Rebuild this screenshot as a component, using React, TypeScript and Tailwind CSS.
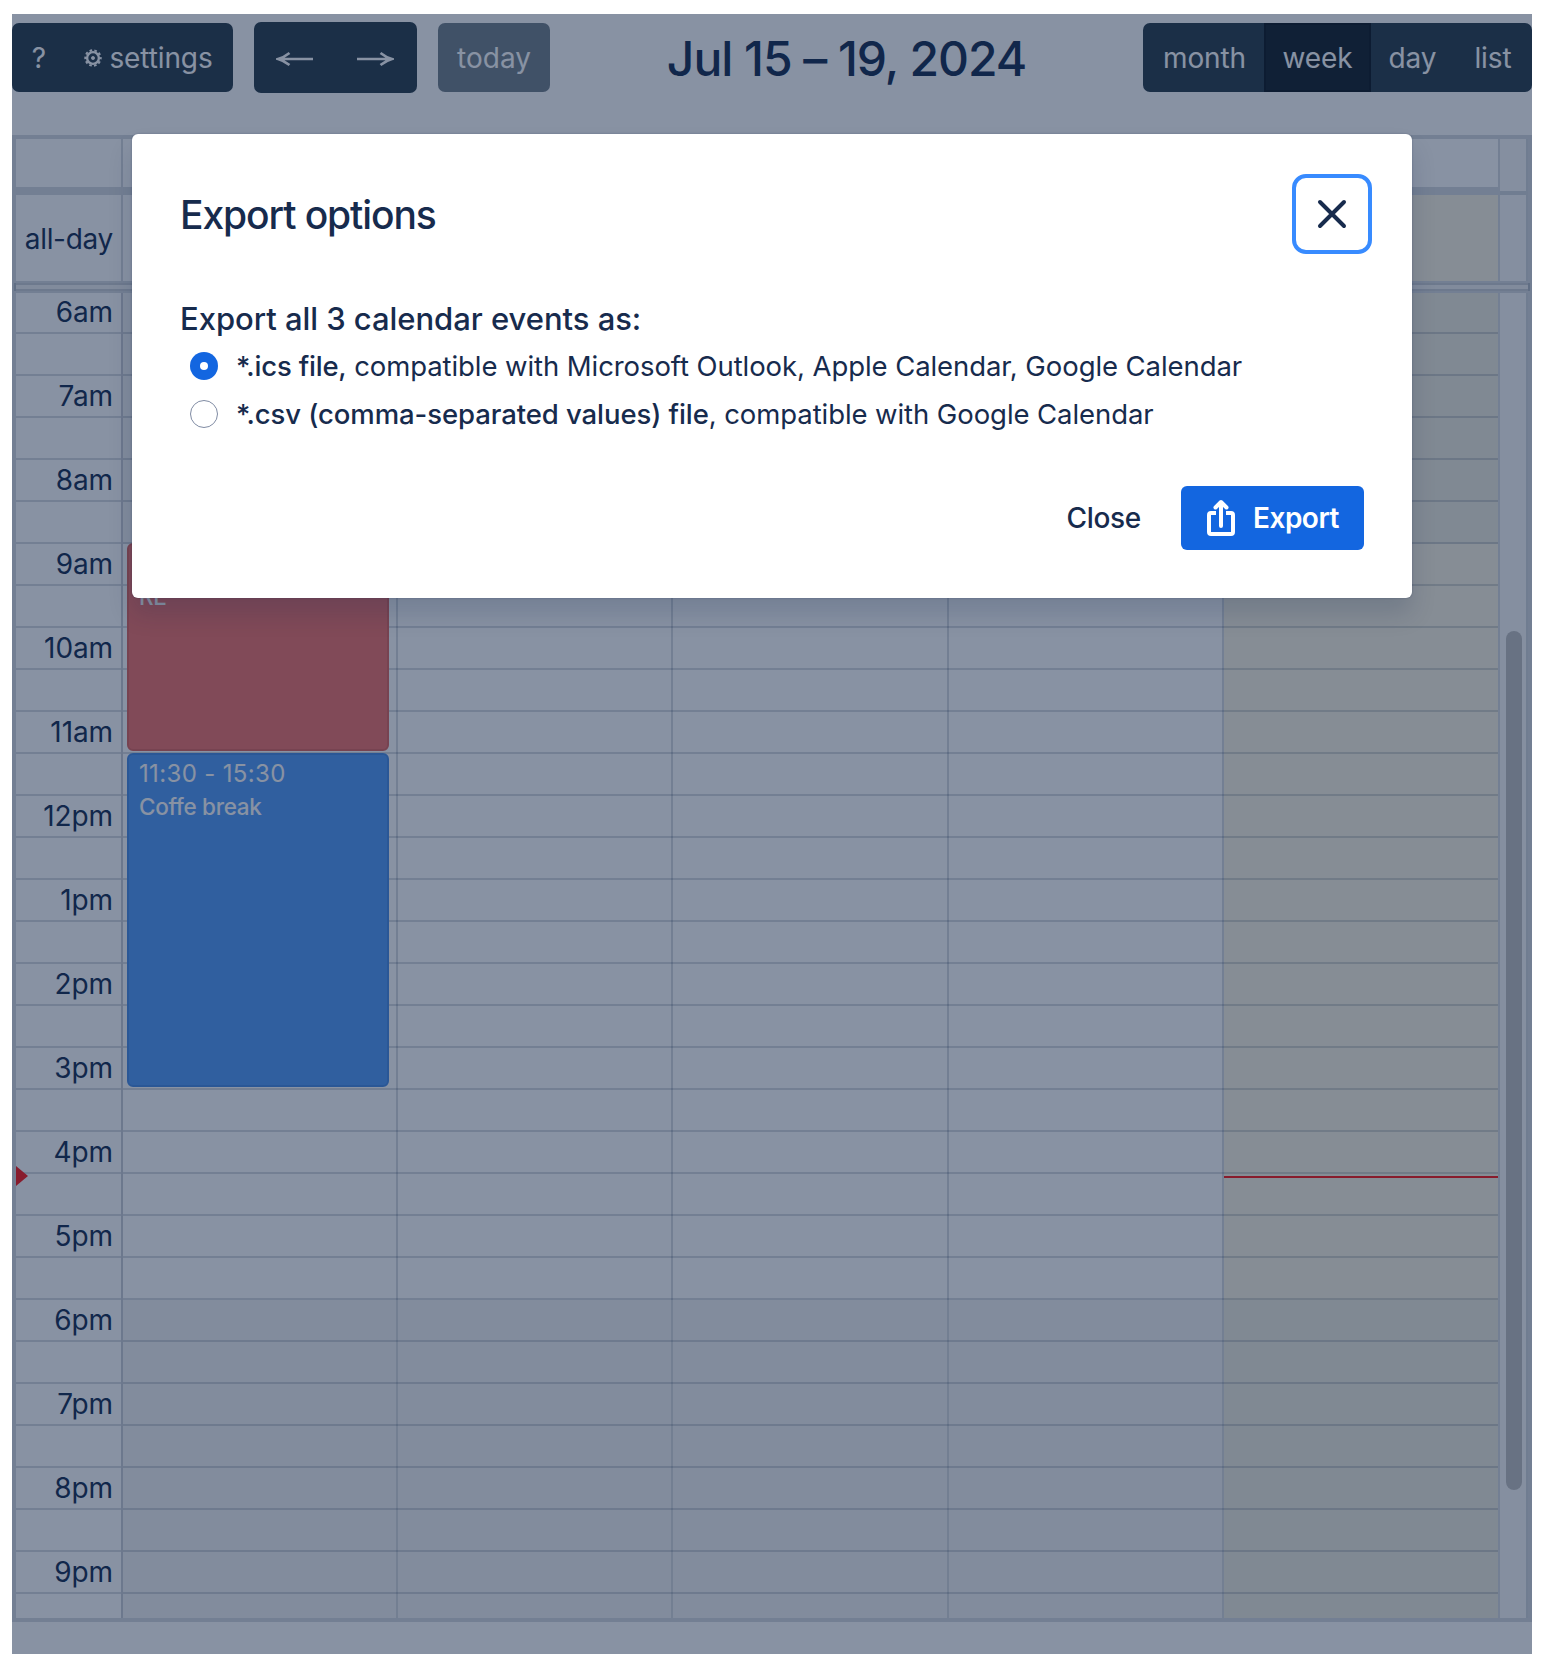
const hours = [
  "6am", "7am", "8am", "9am", "10am", "11am", "12pm", "1pm",
  "2pm", "3pm", "4pm", "5pm", "6pm", "7pm", "8pm", "9pm",
];

const slots = Array.from({ length: 31 }, (_, i) => i);

const line = "border-[#091e42]/16";

function GearIcon() {
  return (
    <svg className="mr-[7px] size-[18px]" viewBox="0 0 18 18" fill="none" stroke="currentColor">
      <circle cx="9" cy="9" r="5.9" strokeWidth="2.4" />
      <circle cx="9" cy="9" r="1.6" fill="currentColor" strokeWidth="0.8" />
      <circle cx="9" cy="9" r="7.7" strokeWidth="2" strokeDasharray="2.6 2.238" strokeDashoffset="1.3" />
    </svg>
  );
}

function ArrowIcon({ flip = false }: { flip?: boolean }) {
  return (
    <svg
      className={flip ? "-ml-0.5 h-4 w-[38px] -scale-x-100" : "h-4 w-[38px]"}
      viewBox="0 0 38 16"
      fill="none"
      stroke="currentColor"
      strokeWidth="2.6"
    >
      <path d="M37 8H2M13.5 2C10.5 4.4 6.500 6.800 2 8C6.500 9.200 10.500 11.600 13.500 14" />
    </svg>
  );
}

function Toolbar() {
  return (
    <header className="flex h-[87px] items-center justify-between text-[28px] text-white">
      <div className="flex items-center gap-[21px]">
        <div className="flex h-[69px] w-[221px] rounded-[7px] bg-[#2e4150]">
          <button className="w-[54px]">?</button>
          <button className="flex w-[167px] items-center justify-center pr-0.5 tracking-[-0.1px]">
            <GearIcon />
            settings
          </button>
        </div>
        <div className="flex h-[71px] w-[163px] rounded-[7px] bg-[#2e4150]">
          <button className="flex flex-1 items-center justify-center pt-[3px]">
            <ArrowIcon />
          </button>
          <button className="flex flex-1 items-center justify-center pt-[3px]">
            <ArrowIcon flip />
          </button>
        </div>
        <button className="h-[69px] w-[112px] rounded-[7px] bg-[#2e4150] opacity-65">today</button>
      </div>
      <h2 className="pt-0.5 text-[48px] leading-none font-medium tracking-[-1.05px] text-[#1b3256]">
        Jul 15 – 19, 2024
      </h2>
      <div className="flex h-[69px] overflow-hidden rounded-[7px] bg-[#2e4150] tracking-[-0.1px]">
        <button className="w-[121px] pl-0.5">month</button>
        <button className="w-[107px] border-2 border-[#151e27] bg-[#1a252f]">week</button>
        <button className="w-[83px]">day</button>
        <button className="w-[78px]">list</button>
      </div>
    </header>
  );
}

function CalendarEvent({ time, title, className }: { time: string; title: string; className: string }) {
  return (
    <div className={`absolute left-1 w-[262px] rounded-md border-2 px-2.5 pt-0.5 text-white ${className}`}>
      <div className="text-[24px] leading-[34px] tracking-[0.35px]">{time}</div>
      <div className="text-[22.5px] leading-[32px] font-medium tracking-[-0.3px]">{title}</div>
    </div>
  );
}

const dayColumns = "grid w-[1377px] grid-cols-[275px_275px_276px_275px_276px]";

function DayCells({ today = "" }: { today?: string }) {
  return (
    <div className={dayColumns}>
      <div className={`border-r-2 ${line}`} />
      <div className={`border-r-2 ${line}`} />
      <div className={`border-r-2 ${line}`} />
      <div className={`border-r-2 ${line}`} />
      <div className={`border-r-2 bg-clip-padding ${line} ${today}`} />
    </div>
  );
}

function Calendar() {
  return (
    <div className={`mt-[34px] flex h-[1487px] flex-col border-4 ${line}`}>
      <div className="flex h-14">
        <div className={`flex flex-1 border-b-8 ${line}`}>
          <div className={`w-[107px] border-r-2 ${line}`} />
          <DayCells />
        </div>
        <div className={`h-14 w-7 border-r-2 border-b-4 bg-[#fafafa] ${line}`} />
      </div>

      <div className={`flex h-[88px] border-b-2 ${line}`}>
        <div className={`flex w-[107px] items-center justify-end border-r-2 pt-px pr-2 text-[28px] tracking-[-0.3px] ${line}`}>
          all-day
        </div>
        <DayCells today="bg-[#fbf6e4]" />
        <div className={`w-7 border-r-2 bg-[#fafafa] ${line}`} />
      </div>

      <div className="-mx-0.5 h-2 border-2 border-[#091e42]/16 bg-[#d0d0d0]/30 bg-clip-border" />
      <div className={`h-0.5 border-b-2 ${line}`} />

      <div className="relative flex flex-1 overflow-hidden">
        <div className="w-[107px] border-r-2 border-[#091e42]/22 text-[28px] tracking-[-0.1px]">
          {hours.map((h) => (
            <div key={h} className="first:-mt-px">
              <div className={`flex h-[42px] items-center justify-end border-b-2 pr-2 ${line}`}>{h}</div>
              <div className={`h-[42px] border-b-2 ${line}`} />
            </div>
          ))}
        </div>

        <div className="relative w-[1377px]">
          <div className="absolute inset-0 grid grid-cols-[275px_275px_276px_275px_276px]">
            <div className={`relative border-r-2 ${line}`}>
              <CalendarEvent
                time="9:00 - 11:30"
                title="RE"
                className="top-[250px] z-10 h-[208px] border-[#de6862] bg-[#f27570]"
              />
              <CalendarEvent
                time="11:30 - 15:30"
                title="Coffe break"
                className="top-[460px] z-10 h-[334px] border-[#4c8ee6] bg-[#579ef8]"
              />
            </div>
            <div className={`border-r-2 ${line}`} />
            <div className={`border-r-2 ${line}`} />
            <div className={`border-r-2 ${line}`} />
            <div className={`relative border-r-2 bg-[#fbf6e4] bg-clip-padding ${line}`}>
              <div className="absolute top-[883px] z-10 h-0.5 w-full bg-[#ff1e1e]" />
            </div>
          </div>
          <div className="relative -mt-px w-[1375px]">
            {slots.map((s) => (
              <div
                key={s}
                className={
                  s < 6 || s >= 24
                    ? "h-[42px] border-b-2 border-[#091e42]/16 bg-[#d7d7d7]/30"
                    : "h-[42px] border-b-2 border-[#091e42]/16"
                }
              />
            ))}
            <div className="h-[26px] bg-[#d7d7d7]/30" />
          </div>
        </div>

        <div className={`w-7 border-r-2 bg-[#fafafa] pt-[338px] pl-1.5 ${line}`}>
          <div className="h-[859px] w-4 rounded-full bg-[#c1c1c1]" />
        </div>

        <svg className="absolute top-[873px] left-0 h-5 w-3 text-[#ff1e1e]" viewBox="0 0 12 20" fill="currentColor">
          <path d="M0 0 12 10 0 20z" />
        </svg>
      </div>
    </div>
  );
}

function ExportDialog() {
  return (
    <div
      role="dialog"
      className="absolute top-[120px] left-[120px] flex h-[464px] w-[1280px] flex-col rounded-md bg-white pt-10 pr-12 pb-12 pl-12 text-[#172b4d] shadow-[0_16px_24px_#091e4226,0_0_2px_#091e424f]"
    >
      <div className="-mr-2 flex h-20 items-center justify-between">
        <h1 className="pt-[3px] text-[39px] font-medium tracking-[-1.1px]">Export options</h1>
        <button className="flex size-20 items-center justify-center rounded-[14px] border-4 border-[#388bff]">
          <svg className="size-8" viewBox="0 0 32 32" fill="none" stroke="currentColor" strokeWidth="4" strokeLinecap="round">
            <path d="M4 4 28 28M28 4 4 28" />
          </svg>
        </button>
      </div>
      <h3 className="mt-[45px] text-[31px] leading-10 font-medium tracking-[-0.04px]">Export all 3 calendar events as:</h3>
      <div className="mt-[3px] pl-2.5 text-[27.5px] tracking-[-0.08px]">
        <label className="flex h-12 items-center">
          <span className="mr-[18px] flex size-7 items-center justify-center rounded-full bg-[#1366e0]">
            <span className="size-2 rounded-full bg-white" />
          </span>
          <span className="pt-0.5">
            <b className="font-medium tracking-[-0.2px]">*.ics file,</b> compatible with Microsoft Outlook, Apple Calendar, Google Calendar
          </span>
        </label>
        <label className="flex h-12 items-center">
          <span className="mr-[18px] size-7 rounded-full border border-[#7f8ba3]" />
          <span className="pt-0.5">
            <b className="font-medium tracking-[-0.08px]">*.csv (comma-separated values) file</b>, compatible with Google Calendar
          </span>
        </label>
      </div>
      <div className="mt-auto flex h-16 items-stretch justify-end text-[28px] font-medium">
        <button className="mr-10 tracking-[-0.3px]">Close</button>
        <button className="flex w-[183px] items-center rounded-md bg-[#1366e0] pl-6 text-white">
          <svg className="h-10 w-8" viewBox="0 0 32 40" fill="none" stroke="currentColor" strokeWidth="4" strokeLinejoin="round">
            <path d="M11 15H6Q4 15 4 17V34Q4 36 6 36H26Q28 36 28 34V17Q28 15 26 15H21" />
            <path d="M16 28V5M10.500 9.500 16 4 21.500 9.500" strokeLinecap="round" />
          </svg>
          <span className="ml-4 font-semibold tracking-[-0.5px]">Export</span>
        </button>
      </div>
    </div>
  );
}

export default function App() {
  return (
    <div className="h-[1664px] w-[1544px] bg-white pt-3.5 pl-3 font-['Inter',sans-serif] text-[#1b3256]">
      <main className="relative h-[1640px] w-[1520px]">
        <Toolbar />
        <Calendar />
        <div className="absolute inset-0 z-20 bg-[#071b3e]/48">
          <ExportDialog />
        </div>
      </main>
    </div>
  );
}
